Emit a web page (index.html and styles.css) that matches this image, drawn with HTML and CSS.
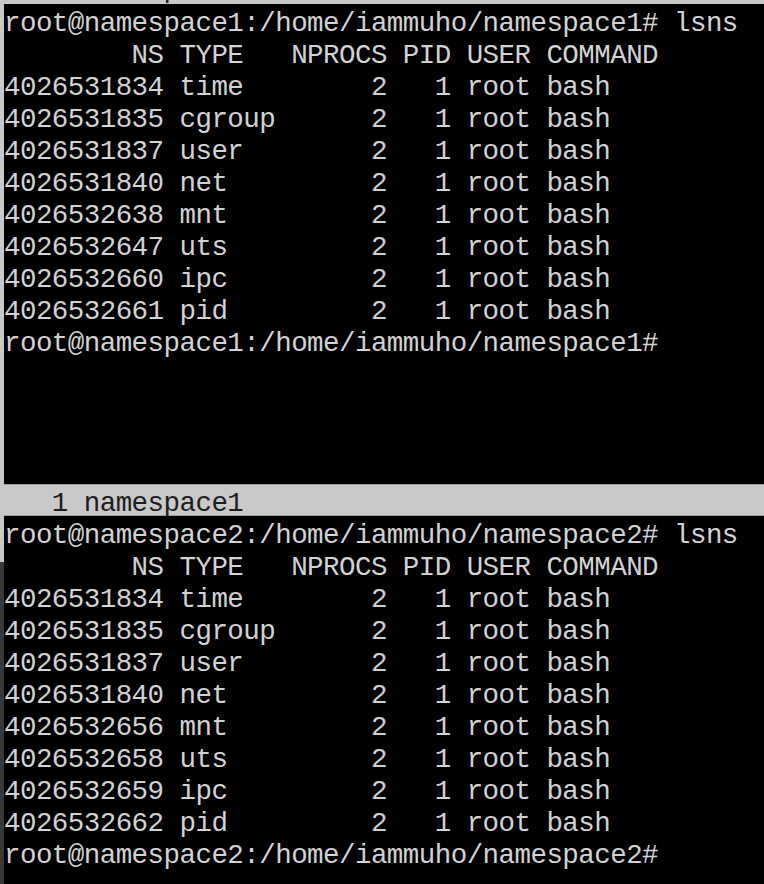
FILE: index.html
```html
<!DOCTYPE html>
<html>
<head>
<meta charset="utf-8">
<link rel="stylesheet" href="styles.css">
</head>
<body>
<div class="screen">
  <div class="gutter">
    <div class="gutter-top"></div>
    <div class="gutter-bottom"></div>
  </div>
  <div class="term">
    <div class="prev-status"><div class="line">   1 namespa</div></div>
    <div class="pane pane-top">
      <div class="line">root@namespace1:/home/iammuho/namespace1# lsns</div>
      <div class="line">        NS TYPE   NPROCS PID USER COMMAND</div>
      <div class="line">4026531834 time        2   1 root bash</div>
      <div class="line">4026531835 cgroup      2   1 root bash</div>
      <div class="line">4026531837 user        2   1 root bash</div>
      <div class="line">4026531840 net         2   1 root bash</div>
      <div class="line">4026532638 mnt         2   1 root bash</div>
      <div class="line">4026532647 uts         2   1 root bash</div>
      <div class="line">4026532660 ipc         2   1 root bash</div>
      <div class="line">4026532661 pid         2   1 root bash</div>
      <div class="line">root@namespace1:/home/iammuho/namespace1#</div>
    </div>
    <div class="status line">   1 namespace1</div>
    <div class="pane pane-bottom">
      <div class="line">root@namespace2:/home/iammuho/namespace2# lsns</div>
      <div class="line">        NS TYPE   NPROCS PID USER COMMAND</div>
      <div class="line">4026531834 time        2   1 root bash</div>
      <div class="line">4026531835 cgroup      2   1 root bash</div>
      <div class="line">4026531837 user        2   1 root bash</div>
      <div class="line">4026531840 net         2   1 root bash</div>
      <div class="line">4026532656 mnt         2   1 root bash</div>
      <div class="line">4026532658 uts         2   1 root bash</div>
      <div class="line">4026532659 ipc         2   1 root bash</div>
      <div class="line">4026532662 pid         2   1 root bash</div>
      <div class="line">root@namespace2:/home/iammuho/namespace2#</div>
    </div>
  </div>
</div>
</body>
</html>
```

FILE: styles.css
```css
html, body {
  margin: 0;
  padding: 0;
  background: #000;
}

.screen {
  display: grid;
  grid-template-columns: 4px 1fr;
  width: 764px;
  height: 884px;
  overflow: hidden;
  background: #000;
}

.gutter {
  display: flex;
  flex-direction: column;
}

.gutter-top {
  height: 562px;
  background: #c9c9c9;
}

.gutter-bottom {
  flex: 1;
  background: #383838;
}

.term {
  display: flex;
  flex-direction: column;
  font-family: "Liberation Mono", monospace;
  font-size: 27.5px;
  letter-spacing: -0.55px;
  color: #d2d2d2;
  min-width: 0;
}

.line {
  height: 32px;
  line-height: 32px;
  padding-top: 4px;
  box-sizing: border-box;
  white-space: pre;
}

.prev-status {
  height: 4px;
  overflow: hidden;
  background: #c9c9c9;
  color: #222;
}

.prev-status .line {
  margin-top: -30px;
}

.pane-top {
  height: 480px;
}

.status {
  background: #c9c9c9;
  color: #1e1e1e;
  border-top: 1px solid #9a9a9a;
  border-bottom: 1px solid #9a9a9a;
  padding-top: 3px;
}

.pane-bottom {
  flex: 1;
}
```
